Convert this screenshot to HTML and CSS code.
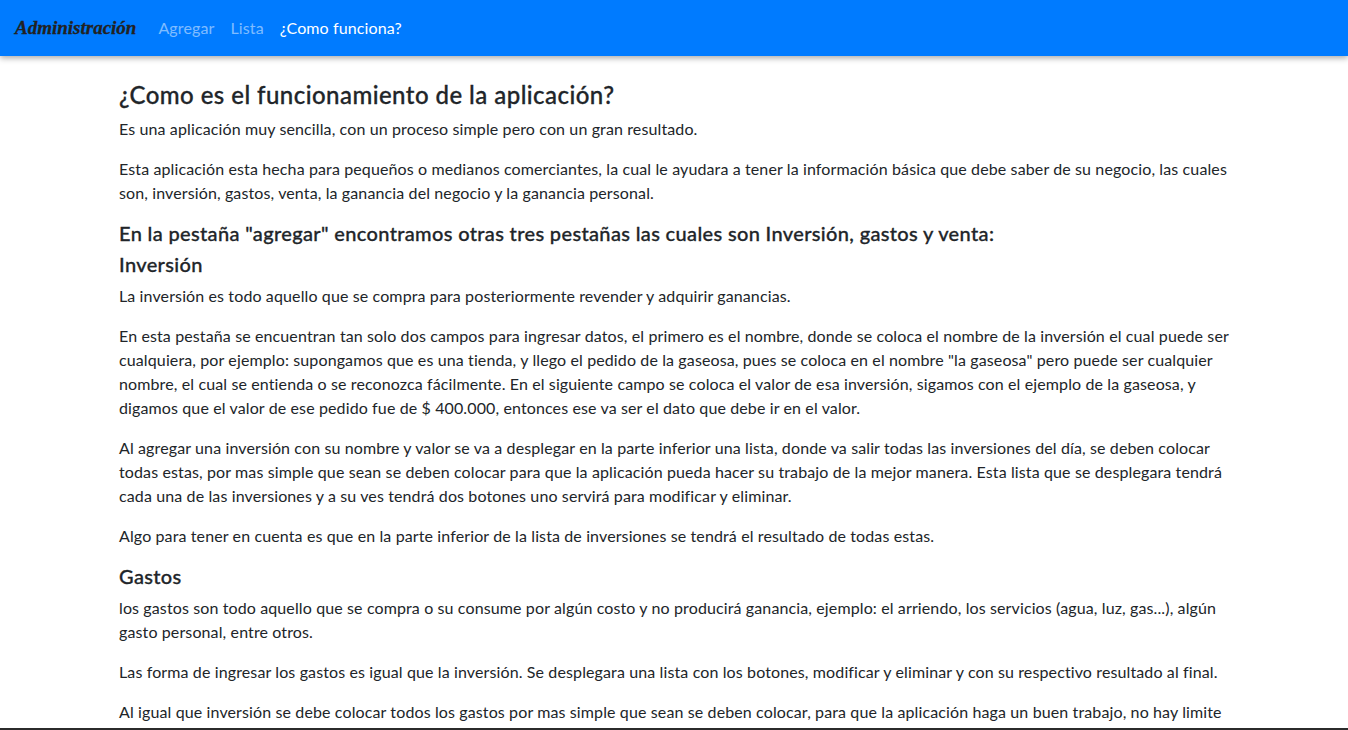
FILE: index.html
```html
<!DOCTYPE html>
<html lang="es">
<head>
<meta charset="utf-8">
<title>Administración</title>
<link rel="stylesheet" href="styles.css">
</head>
<body>
<nav class="navbar">
  <a class="brand" href="#">Administración</a>
  <ul class="nav">
    <li><a class="nav-link" href="#">Agregar</a></li>
    <li><a class="nav-link" href="#">Lista</a></li>
    <li><a class="nav-link active" href="#">¿Como funciona?</a></li>
  </ul>
</nav>
<main class="container">
  <h3 class="title">¿Como es el funcionamiento de la aplicación?</h3>
  <p>Es una aplicación muy sencilla, con un proceso simple pero con un gran resultado.</p>
  <p>Esta aplicación esta hecha para pequeños o medianos comerciantes, la cual le ayudara a tener la información básica que debe saber de su negocio, las cuales son, inversión, gastos, venta, la ganancia del negocio y la ganancia personal.</p>
  <h5 class="lead-head">En la pestaña "agregar" encontramos otras tres pestañas las cuales son Inversión, gastos y venta:</h5>
  <h5 class="section">Inversión</h5>
  <p>La inversión es todo aquello que se compra para posteriormente revender y adquirir ganancias.</p>
  <p>En esta pestaña se encuentran tan solo dos campos para ingresar datos, el primero es el nombre, donde se coloca el nombre de la inversión el cual puede ser cualquiera, por ejemplo: supongamos que es una tienda, y llego el pedido de la gaseosa, pues se coloca en el nombre "la gaseosa" pero puede ser cualquier nombre, el cual se entienda o se reconozca fácilmente. En el siguiente campo se coloca el valor de esa inversión, sigamos con el ejemplo de la gaseosa, y digamos que el valor de ese pedido fue de $ 400.000, entonces ese va ser el dato que debe ir en el valor.</p>
  <p>Al agregar una inversión con su nombre y valor se va a desplegar en la parte inferior una lista, donde va salir todas las inversiones del día, se deben colocar todas estas, por mas simple que sean se deben colocar para que la aplicación pueda hacer su trabajo de la mejor manera. Esta lista que se desplegara tendrá cada una de las inversiones y a su ves tendrá dos botones uno servirá para modificar y eliminar.</p>
  <p>Algo para tener en cuenta es que en la parte inferior de la lista de inversiones se tendrá el resultado de todas estas.</p>
  <h5 class="section">Gastos</h5>
  <p>los gastos son todo aquello que se compra o su consume por algún costo y no producirá ganancia, ejemplo: el arriendo, los servicios (agua, luz, gas...), algún gasto personal, entre otros.</p>
  <p>Las forma de ingresar los gastos es igual que la inversión. Se desplegara una lista con los botones, modificar y eliminar y con su respectivo resultado al final.</p>
  <p>Al igual que inversión se debe colocar todos los gastos por mas simple que sean se deben colocar, para que la aplicación haga un buen trabajo, no hay limite de gastos, se pueden agregar todos los que sean necesarios.</p>
</main>
<div class="bottom-edge"></div>
</body>
</html>
```

FILE: styles.css
```css
* { box-sizing: border-box; }
html, body { margin: 0; padding: 0; }
body {
  font-family: Lato, "Noto Sans", sans-serif;
  font-size: 16px;
  line-height: 24px;
  letter-spacing: 0.12px;
  color: #212529;
  background: #fff;
}
.navbar {
  height: 56px;
  background: #007bff;
  display: flex;
  align-items: center;
  padding: 0 15px;
  box-shadow: 0 2px 6px rgba(0,0,0,0.35);
}
.brand {
  font-family: "Liberation Serif", "DejaVu Serif", serif;
  font-weight: bold;
  font-style: italic;
  font-size: 19px;
  letter-spacing: 0;
  color: #222;
  text-decoration: none;
  margin-right: 14px;
  -webkit-text-stroke: 0.3px #222;
}
.nav { list-style: none; margin: 0; padding: 0; display: flex; }
.nav-link {
  display: block;
  padding: 8px 8px;
  color: rgba(255,255,255,0.5);
  text-decoration: none;
}
.nav-link.active { color: #fff; }
.container {
  width: 1140px;
  margin: 0 auto;
  padding: 24px 15px 0;
}
.title {
  font-size: 24px;
  font-weight: 500;
  line-height: 29px;
  letter-spacing: 0.45px;
  margin: 0 0 8px;
  -webkit-text-stroke: 0.3px #212529;
}
p { margin: 0 0 16px; }
.lead-head, .section {
  font-size: 20px;
  font-weight: 500;
  line-height: 24px;
  letter-spacing: 0.35px;
  -webkit-text-stroke: 0.3px #212529;
}
.lead-head { margin: 1px 0 7px; }
.section { margin: 0 0 8px; }
.bottom-edge {
  position: fixed;
  left: 0; right: 0; bottom: 0;
  height: 2px;
  background: #2b2b2b;
}
```
